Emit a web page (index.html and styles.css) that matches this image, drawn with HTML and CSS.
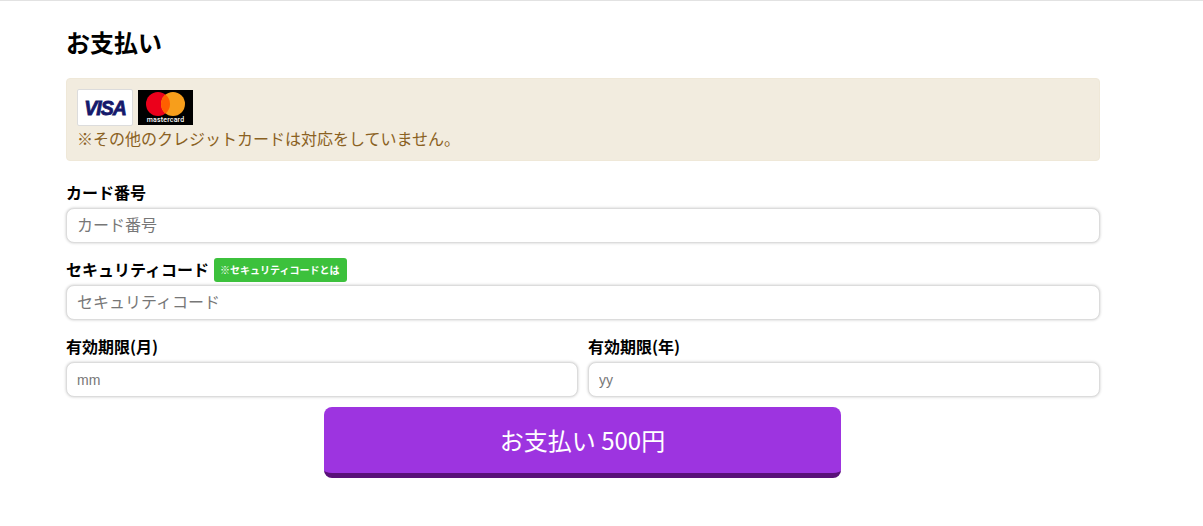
FILE: index.html
```html
<!DOCTYPE html>
<html lang="ja">
<head>
<meta charset="utf-8">
<title>お支払い</title>
<link rel="stylesheet" href="styles.css">
</head>
<body>
<main class="page">
  <h1 class="title">お支払い</h1>
  <div class="notice">
    <div class="cards">
      <span class="card card-visa">
        <svg width="54" height="35" viewBox="0 0 54 35"><text x="27" y="25" text-anchor="middle" class="visa-text">VISA</text></svg>
      </span>
      <span class="card card-mc">
        <svg width="55" height="35" viewBox="0 0 55 35">
          <circle cx="20" cy="14" r="12" fill="#eb001b"/>
          <circle cx="35" cy="14" r="12" fill="#f79e1b"/>
          <path d="M27.5 4.6a12 12 0 0 1 0 18.8a12 12 0 0 1 0-18.8z" fill="#ff5f00"/>
          <text x="27.5" y="32" text-anchor="middle" class="mc-text">mastercard</text>
        </svg>
      </span>
    </div>
    <p class="notice-text">※その他のクレジットカードは対応をしていません。</p>
  </div>
  <form class="form">
    <div class="field">
      <div class="label-row">
        <label class="label">カード番号</label>
      </div>
      <input class="input" type="text" placeholder="カード番号">
    </div>
    <div class="field">
      <div class="label-row">
        <label class="label">セキュリティコード</label>
        <span class="badge">※セキュリティコードとは</span>
      </div>
      <input class="input" type="text" placeholder="セキュリティコード">
    </div>
    <div class="field-row">
      <div class="field">
        <div class="label-row">
          <label class="label">有効期限(月)</label>
        </div>
        <input class="input input-small" type="text" placeholder="mm">
      </div>
      <div class="field">
        <div class="label-row">
          <label class="label">有効期限(年)</label>
        </div>
        <input class="input input-small" type="text" placeholder="yy">
      </div>
    </div>
    <button class="submit" type="button">お支払い 500円</button>
  </form>
</main>
</body>
</html>
```
FILE: styles.css
```css
* { box-sizing: border-box; }
html, body { margin: 0; padding: 0; }
body {
  background: #fff;
  color: #000;
  border-top: 1px solid #e2e2e2;
  font-family: "Noto Sans CJK JP", "Noto Sans", sans-serif;
}
.page {
  width: 1034px;
  margin-left: 66px;
  padding-top: 23px;
}
.title {
  margin: 0 0 19px;
  font-size: 24px;
  line-height: 35px;
  font-weight: 700;
}
.notice {
  height: 83px;
  padding: 10px 10px 0;
  background: #f2ecdf;
  border: 1px solid #efe8d8;
  border-radius: 4px;
  color: #8a6122;
}
.cards { display: flex; gap: 5px; align-items: center; height: 37px; }
.card { display: block; }
.card svg { display: block; }
.card-visa {
  width: 56px;
  height: 37px;
  background: #fff;
  border: 1px solid #dcdcdc;
  border-radius: 2px;
  overflow: hidden;
}
.card-mc { width: 55px; height: 35px; background: #000; }
.visa-text {
  font-family: "Liberation Sans", sans-serif;
  font-size: 19.5px;
  font-weight: 700;
  font-style: italic;
  fill: #15196b;
  stroke: #15196b;
  stroke-width: 0.8px;
  letter-spacing: -1px;
}
.mc-text {
  font-family: Roboto, sans-serif;
  font-size: 7px;
  font-weight: 500;
  letter-spacing: 0.2px;
  fill: #fff;
}
.notice-text {
  margin: 0;
  font-size: 16px;
  line-height: 24px;
}
.form { padding-top: 17px; }
.field { display: flex; flex-direction: column; flex: 1; margin-bottom: 12px; }
.label {
  display: block;
  font-size: 16px;
  line-height: 28px;
  padding-bottom: 2px;
  font-weight: 700;
}
.label-row { display: flex; align-items: center; gap: 5px; height: 30px; }
.badge {
  background: #3cc13c;
  color: #fff;
  font-size: 10px;
  font-weight: 700;
  line-height: 24px;
  height: 24px;
  padding: 0 8px 0 6px;
  border-radius: 3px;
  white-space: nowrap;
}
.input {
  display: block;
  width: 100%;
  height: 35px;
  padding: 0 10px 3px;
  border: 1px solid #dcdcdc;
  border-radius: 8px;
  box-shadow: 0 0 3px rgba(0,0,0,.22);
  background: #fff;
  font-family: "Noto Sans CJK JP", sans-serif;
  font-size: 16px;
  outline: none;
}
.input::placeholder { color: #777; opacity: 1; }
.input-small { padding: 0 10px; font-family: "Liberation Sans", sans-serif; font-size: 14px; }
.field-row { display: flex; gap: 10px; }
.field-row .field { margin-bottom: 10px; }
.submit {
  display: block;
  width: 517px;
  height: 71px;
  margin: 0 0 0 258px;
  padding: 0 0 1px;
  background: #9d34e0;
  border: 0;
  border-bottom: 5px solid #591079;
  border-radius: 8px;
  color: #fff;
  font-family: "Noto Sans CJK JP", sans-serif;
  font-size: 24px;
}
```
